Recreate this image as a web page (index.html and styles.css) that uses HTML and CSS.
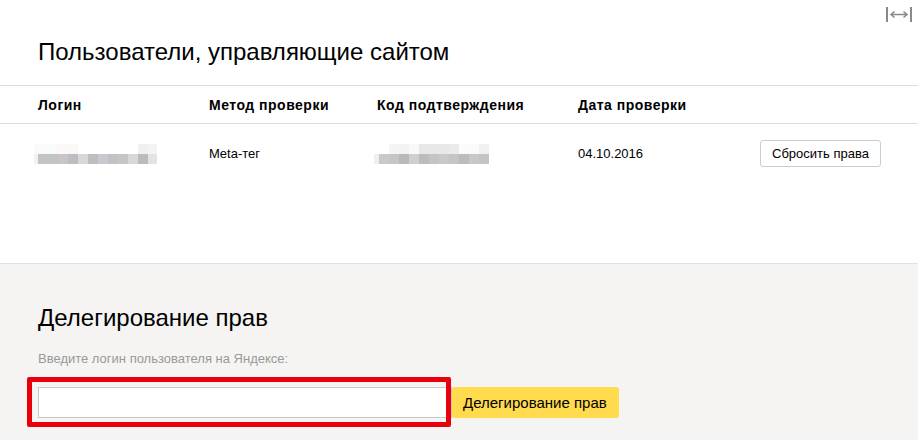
FILE: index.html
```html
<!DOCTYPE html>
<html>
<head>
    <title>Права на управление сайтом</title>
    <link rel="stylesheet" href="styles.css">
</head>
<body>
    <div class="owners">
        <div class="toolbar">
            <svg class="expand" width="26" height="15" viewBox="0 0 26 15">
                <rect x="0" y="0" width="2" height="15" fill="#8a8a8a"/>
                <rect x="24" y="0" width="2" height="15" fill="#8a8a8a"/>
                <path d="M5 7.5 H21 M8.5 4.5 L5 7.5 L8.5 10.5 M17.5 4.5 L21 7.5 L17.5 10.5" stroke="#8a8a8a" stroke-width="1.5" fill="none"/>
            </svg>
        </div>
        <h1>Пользователи, управляющие сайтом</h1>

        <div class="grid head">
            <div>Логин</div>
            <div>Метод проверки</div>
            <div>Код подтверждения</div>
            <div>Дата проверки</div>
            <div></div>
        </div>
        <div class="grid row">
            <div><span class="hidden-text login"></span></div>
            <div>Meta-тег</div>
            <div><span class="hidden-text code"></span></div>
            <div>04.10.2016</div>
            <div><button class="btn">Сбросить права</button></div>
        </div>
    </div>

    <div class="delegate">
        <h2>Делегирование прав</h2>
        <label for="login">Введите логин пользователя на Яндексе:</label>
        <div class="delegate-form">
            <input type="text" id="login" name="login">
            <button class="btn btn-action">Делегирование прав</button>
            <div class="highlight"></div>
        </div>
    </div>
</body>
</html>
```

FILE: styles.css
```css
body {
    margin: 0;
    font-family: "Liberation Sans", Arial, sans-serif;
    color: #000;
    background-color: #f5f4f2;
}
.owners {
    background-color: #fff;
    height: 263px;
    border-bottom: 1px solid #e2e1df;
}
.toolbar {
    display: flex;
    justify-content: flex-end;
    padding: 7px 6px 0 0;
    height: 15px;
}
h1, h2 {
    font-weight: normal;
    margin: 0;
}
h1 {
    font-size: 24px;
    line-height: 28px;
    padding: 16px 38px 19px;
    border-bottom: 1px solid #dcdcdc;
}
.grid {
    display: grid;
    grid-template-columns: 171px 168px 201px 182px 1fr;
    padding-left: 38px;
    font-size: 13px;
    line-height: 16px;
    align-items: center;
}
.head {
    font-size: 14px;
    font-weight: bold;
    letter-spacing: 0.5px;
    padding-top: 11px;
    padding-bottom: 10px;
    border-bottom: 1px solid #dcdcdc;
}
.row {
    padding-top: 16px;
}
.hidden-text {
    display: block;
    height: 20px;
}
.login {
    width: 123px;
    margin-left: -4px;
    background:
        linear-gradient(90deg, #f6f1f1 0 4px, #c4c2c4 4px 14px, #c2c4c3 14px 24px, #cbc3ca 24px 34px, #bfbcc1 34px 44px, #d8d8d8 44px 54px, #c0bdc0 54px 64px, #cdc8cf 64px 74px, #c2c1c6 74px 84px, #c6c6c3 84px 94px, #d8d8d8 94px 104px, #bdbbba 104px 114px, #e0e4e8 114px) bottom / 100% 10px no-repeat,
        linear-gradient(90deg, #fafafa 0 24px, #fcf8f9 24px 44px, #fff 44px 104px, #f0f0f0 104px 114px, #f3f3f3 114px) top / 100% 10px no-repeat;
}
.code {
    width: 115px;
    margin-left: -3px;
    background:
        linear-gradient(90deg, #efefef 0 5px, #c9c9c9 5px 15px, #c4c8c4 15px 25px, #b9b9bb 25px 35px, #cfcfcf 35px 45px, #bcbcbc 45px 55px, #c4c4c4 55px 65px, #c9c9c9 65px 75px, #c5c5c5 75px 85px, #b9bdbd 85px 95px, #c8c8c8 95px 105px, #c4c4c4 105px) bottom / 100% 10px no-repeat,
        linear-gradient(90deg, #fff 0 15px, #f5f5f5 15px 25px, #f5f3f2 25px 35px, #f9f9fa 35px 45px, #e8e8e8 45px 75px, #ebebeb 75px 85px, #fbfbfb 85px 105px, #f0f0f0 105px) top / 100% 10px no-repeat;
}
.btn {
    font-family: inherit;
    font-size: 13px;
    height: 27px;
    padding: 0 11px;
    background-color: #fff;
    border: 1px solid #cdcdcd;
    border-radius: 3px;
    color: #000;
    cursor: pointer;
}
.delegate {
    padding: 40px 38px 22px;
}
h2 {
    font-size: 24px;
    line-height: 28px;
}
label {
    display: block;
    margin-top: 19px;
    font-size: 13px;
    line-height: 16px;
    color: #999;
}
.delegate-form {
    position: relative;
    display: flex;
    margin-top: 20px;
}
input {
    box-sizing: border-box;
    width: 414px;
    height: 31px;
    border: 1px solid #c8c8c8;
    background-color: #fff;
    margin: 0;
}
.btn-action {
    height: 31px;
    font-size: 15px;
    padding: 0 12px 0 11px;
    border: none;
    background-color: #ffdb4d;
}
.highlight {
    position: absolute;
    left: -11px;
    top: -10px;
    width: 424px;
    height: 50px;
    box-sizing: border-box;
    border: 5px solid #e8000b;
    border-radius: 2px;
    pointer-events: none;
}
```
